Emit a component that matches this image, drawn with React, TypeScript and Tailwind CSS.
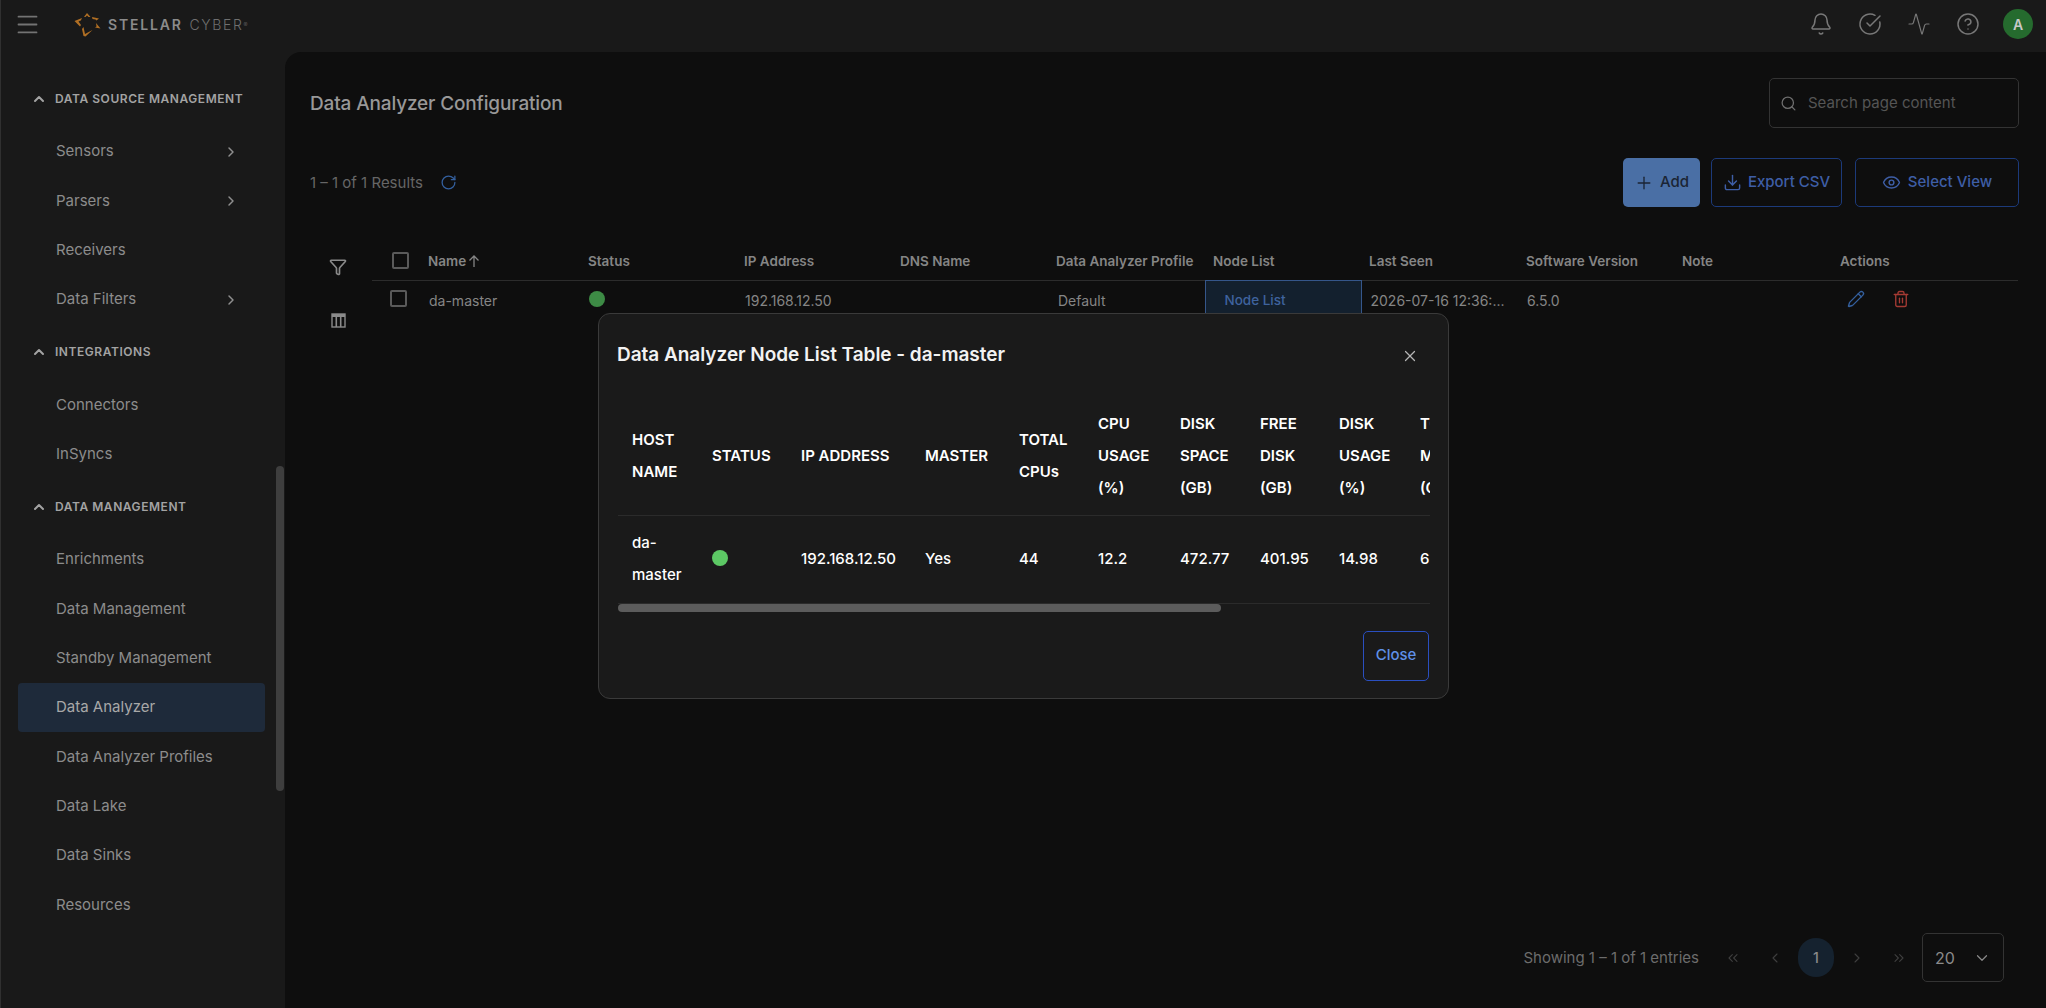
import {
  Activity,
  Bell,
  ChevronDown,
  ChevronLeft,
  ChevronRight,
  ChevronUp,
  ChevronsLeft,
  ChevronsRight,
  CircleCheckBig,
  CircleHelp,
  Download,
  Eye,
  Funnel,
  Menu,
  Pencil,
  Plus,
  RotateCw,
  Search,
  Trash2,
  X,
} from "lucide-react";

const sections = [
  {
    title: "DATA SOURCE MANAGEMENT",
    items: [
      { label: "Sensors", more: true },
      { label: "Parsers", more: true },
      { label: "Receivers" },
      { label: "Data Filters", more: true },
    ],
  },
  {
    title: "INTEGRATIONS",
    items: [{ label: "Connectors" }, { label: "InSyncs" }],
  },
  {
    title: "DATA MANAGEMENT",
    items: [
      { label: "Enrichments" },
      { label: "Data Management" },
      { label: "Standby Management" },
      { label: "Data Analyzer", active: true },
      { label: "Data Analyzer Profiles" },
      { label: "Data Lake" },
      { label: "Data Sinks" },
      { label: "Resources" },
    ],
  },
];

const columns = [
  { label: "Status", width: "w-[156px]" },
  { label: "IP Address", width: "w-[156px]" },
  { label: "DNS Name", width: "w-[156px]" },
  { label: "Data Analyzer Profile", width: "w-[157px]" },
  { label: "Node List", width: "w-[156px]" },
  { label: "Last Seen", width: "w-[157px]" },
  { label: "Software Version", width: "w-[156px]" },
  { label: "Note", width: "w-[158px]" },
  { label: "Actions", width: "w-[186px]" },
];

const nodeColumns = [
  { label: ["HOST", "NAME"], width: "w-[80px]", value: "da-master" },
  { label: ["STATUS"], width: "w-[89px]", value: "" },
  { label: ["IP ADDRESS"], width: "w-[124px]", value: "192.168.12.50" },
  { label: ["MASTER"], width: "w-[94px]", value: "Yes" },
  { label: ["TOTAL", "CPUs"], width: "w-[79px]", value: "44" },
  { label: ["CPU", "USAGE", "(%)"], width: "w-[82px]", value: "12.2" },
  { label: ["DISK", "SPACE", "(GB)"], width: "w-[80px]", value: "472.77" },
  { label: ["FREE", "DISK", "(GB)"], width: "w-[79px]", value: "401.95" },
  { label: ["DISK", "USAGE", "(%)"], width: "w-[81px]", value: "14.98" },
  { label: ["TOTAL", "MEMORY", "(GB)"], width: "w-[90px]", value: "62.50" },
];

function Logo() {
  return (
    <div className="flex items-center gap-[7px]">
      <svg width="27" height="25" viewBox="0 0 27 25" fill="#b06f24">
        <path d="M10 5 L13 1 L16.5 5 L14.5 5 L13 3.4 L11.5 5 Z" />
        <path d="M0.5 9 L8 6 L6.8 8.5 L4.5 9.6 L7 13 L6 14.5 Z" />
        <path d="M18 5 L25 6.5 L22.5 8.6 L21.5 7.5 L18.5 7 Z" />
        <path d="M22 11 L26.5 16.5 L21 15.5 L22.5 14.6 Z" />
        <path d="M9.5 15 L11 22 L17.5 18.5 L18.5 18 L11.5 24.5 L9.5 24 L8 17 Z" />
      </svg>
      <span className="text-[14px] font-semibold tracking-[1.8px] text-[#8b8b8b]">STELLAR</span>
      <span className="text-[14px] font-light tracking-[1.6px] text-[#6f6f6f]">
        CYBER<sup className="text-[6px]">®</sup>
      </span>
    </div>
  );
}

function Sidebar() {
  return (
    <aside className="relative w-[284px] shrink-0 pt-[19px]">
      {sections.map((section) => (
        <div key={section.title}>
          <div className="flex h-[56px] items-center pl-[30px] text-[#a3a3a3]">
            <ChevronUp size={16} strokeWidth={3} />
            <span className="ml-[8px] text-[12px] font-semibold tracking-[0.55px]">{section.title}</span>
          </div>
          {section.items.map((item) => (
            <div
              key={item.label}
              className={`mx-[17px] flex h-[49.33px] w-[247px] items-center justify-between rounded-[4px] pl-[38px] pr-[26px] text-[15px] text-[#8c8c8c] ${
                item.active ? "bg-[#1e2a3a] text-[#a8a8a8]" : ""
              }`}
            >
              {item.label}
              {item.more && <ChevronRight size={16} strokeWidth={2.2} className="text-[#8f8f8f]" />}
            </div>
          ))}
        </div>
      ))}
      <div className="absolute left-[275px] top-[414px] h-[325px] w-[8px] rounded-full bg-[#3e3e3e]" />
    </aside>
  );
}

function ColumnsIcon() {
  return (
    <svg width="15" height="15" viewBox="0 0 15 15" fill="none" stroke="#8a8a8a">
      <rect x="1" y="1" width="13" height="13" strokeWidth="1.4" />
      <path d="M1 2.5 H14" strokeWidth="3" />
      <path d="M5.3 3 V14 M9.7 3 V14" strokeWidth="1.6" />
    </svg>
  );
}

function DataTable() {
  return (
    <div className="mt-[35px] flex items-start">
      <div className="flex w-[62px] shrink-0 flex-col items-center pt-[16px] text-[#8a8a8a]">
        <Funnel size={18} strokeWidth={2.2} className="mr-[6px]" />
        <div className="mr-[6px] mt-[37px]">
          <ColumnsIcon />
        </div>
      </div>
      <table className="w-[1646px] table-fixed border-collapse text-left">
        <thead>
          <tr className="h-[38px] border-b border-[#2c2c2c] text-[13.5px] font-semibold text-[#858585]">
            <th className="w-[48px] pl-[20px] font-semibold">
              <div className="h-[17px] w-[17px] rounded-[2px] border-2 border-[#5a5a5a]" />
            </th>
            <th className="w-[160px] pl-[8px] font-semibold">
              <span className="flex items-center gap-[1px]">
                Name
                <svg width="14" height="14" viewBox="0 0 14 14" fill="none" stroke="#858585" strokeWidth="1.3">
                  <path d="M7 13 V2 M2.5 6.5 L7 2 L11.5 6.5" />
                </svg>
              </span>
            </th>
            {columns.map((column) => (
              <th key={column.label} className={`${column.width} whitespace-nowrap pl-[8px] font-semibold`}>
                {column.label}
              </th>
            ))}
          </tr>
        </thead>
        <tbody>
          <tr className="h-[40px] text-[14px] text-[#858585]">
            <td className="pl-[18px]">
              <div className="mb-[3px] h-[17px] w-[17px] rounded-[2px] border-2 border-[#5a5a5a]" />
            </td>
            <td className="pl-[9px]">da-master</td>
            <td className="pl-[9px]">
              <div className="mb-[3px] h-[16px] w-[16px] rounded-full bg-[#3d8b45]" />
            </td>
            <td className="pl-[9px]">192.168.12.50</td>
            <td />
            <td className="pl-[10px]">Default</td>
            <td className="border border-[#35568a] bg-[#13202e] pl-[19px] text-[13.5px] font-medium text-[#3f639e]">
              Node List
            </td>
            <td className="truncate pl-[9px]">2026-07-16 12:36:...</td>
            <td className="pl-[9px]">6.5.0</td>
            <td />
            <td className="pl-[15px]">
              <div className="mb-[3px] flex items-center gap-[27px]">
                <Pencil size={18} strokeWidth={1.8} className="text-[#34609f]" />
                <Trash2 size={18} strokeWidth={1.8} className="text-[#a43a33]" />
              </div>
            </td>
          </tr>
        </tbody>
      </table>
    </div>
  );
}

function NodeListDialog() {
  return (
    <div className="absolute left-[313px] top-[261px] h-[386px] w-[851px] rounded-[12px] border border-[#3a3a3a] bg-[#1a1a1a] px-[19px]">
      <div className="flex h-[83px] items-center justify-between">
        <h2 className="ml-[-1px] text-[19px] font-semibold tracking-[-0.03px] text-[#f2f2f2]">
          Data Analyzer Node List Table - da-master
        </h2>
        <X size={18} strokeWidth={1.6} className="mr-[10px] text-[#b5b5b5]" />
      </div>
      <div className="w-[812px] overflow-hidden">
        <table className="w-[1094px] table-fixed border-collapse text-left text-[15px] leading-[32px] text-white">
          <thead>
            <tr className="h-[118px] border-b border-[#2b2b2b]">
              {nodeColumns.map((column) => (
                <th key={column.label[0] + column.width} className={`${column.width} pl-[14px] font-semibold`}>
                  {column.label.map((line) => (
                    <div key={line} className="whitespace-nowrap">
                      {line}
                    </div>
                  ))}
                </th>
              ))}
              <th />
            </tr>
          </thead>
          <tbody>
            <tr className="h-[88px] border-b border-[#2b2b2b] font-medium">
              {nodeColumns.map((column) => (
                <td key={column.label[0] + column.width} className="pl-[14px]">
                  {column.value === "" ? (
                    <div className="mb-[3px] h-[16px] w-[16px] rounded-full bg-[#5cc864]" />
                  ) : column.value === "da-master" ? (
                    <>
                      da-
                      <br />
                      master
                    </>
                  ) : (
                    column.value
                  )}
                </td>
              ))}
              <td />
            </tr>
          </tbody>
        </table>
        <div className="h-[8px] w-[603px] rounded-full bg-[#5c5c5c]" />
      </div>
      <div className="mt-[19px] flex justify-end">
        <button className="h-[50px] w-[66px] rounded-[5px] border border-[#2a4fc0] text-[15px] font-medium text-[#5f90e8]">
          Close
        </button>
      </div>
    </div>
  );
}

export default function App() {
  return (
    <div className="flex h-screen w-full flex-col overflow-hidden border-l border-[#303030] bg-[#191919] font-[Inter,sans-serif]">
      <header className="flex h-[52px] shrink-0 items-center pb-[4px] pl-[13px] pr-[13px]">
        <Menu size={27} strokeWidth={1.6} className="text-[#737373]" />
        <div className="ml-[33px]">
          <Logo />
        </div>
        <div className="ml-auto flex items-center gap-[25px] text-[#787878]">
          <Bell size={24} strokeWidth={1.5} />
          <CircleCheckBig size={24} strokeWidth={1.5} />
          <Activity size={24} strokeWidth={1.2} />
          <CircleHelp size={24} strokeWidth={1.5} />
          <div className="ml-[-2px] flex h-[30px] w-[30px] items-center justify-center rounded-full bg-[#256b2e] text-[14px] font-semibold text-[#c9c9c9]">
            A
          </div>
        </div>
      </header>
      <div className="flex min-h-0 flex-1">
        <Sidebar />
        <main className="relative flex min-w-0 flex-1 flex-col rounded-tl-[16px] bg-[#0e0e0e] pl-[25px] pr-[27px]">
          <div className="mt-[26px] flex h-[50px] items-center justify-between">
            <h1 className="pt-[2px] text-[19px] font-medium tracking-[-0.15px] text-[#989898]">
              Data Analyzer Configuration
            </h1>
            <div className="flex h-[50px] w-[250px] items-center rounded-[5px] border border-[#333333] pl-[10px] text-[#6f6f6f]">
              <Search size={17} strokeWidth={1.8} />
              <span className="ml-[11px] text-[15px] text-[#555555]">Search page content</span>
            </div>
          </div>
          <div className="mt-[30px] flex h-[49px] items-center">
            <span className="pt-[1px] text-[15px] text-[#666666]">1 – 1 of 1 Results</span>
            <RotateCw size={17} strokeWidth={1.8} className="ml-[17px] text-[#34609f]" />
            <div className="ml-auto flex h-full items-stretch">
              <button className="flex w-[77px] items-center justify-center gap-[6px] rounded-[5px] bg-[#4a6fa5] text-[15px] font-medium text-[#1b2534]">
                <Plus size={20} strokeWidth={1.6} />
                Add
              </button>
              <button className="ml-[11px] flex w-[131px] items-center justify-center gap-[6px] rounded-[5px] border border-[#1c3a7a] text-[15px] font-medium text-[#3e5ea6]">
                <Download size={19} strokeWidth={1.8} />
                Export CSV
              </button>
              <button className="ml-[13px] flex w-[164px] items-center justify-center gap-[7px] rounded-[5px] border border-[#1c3a7a] text-[15px] font-medium text-[#3e5ea6]">
                <Eye size={19} strokeWidth={1.8} />
                Select View
              </button>
            </div>
          </div>
          <DataTable />
          <div className="mt-auto mb-[26px] flex h-[49px] items-center justify-end pr-[15px] text-[#6c6c6c]">
            <span className="mr-[26px] pt-[1px] text-[15px]">Showing 1 – 1 of 1 entries</span>
            <ChevronsLeft size={16} strokeWidth={1.6} className="text-[#3f3f3f]" />
            <ChevronLeft size={16} strokeWidth={1.6} className="ml-[26px] text-[#3f3f3f]" />
            <div className="ml-[15px] flex h-[39px] w-[36px] items-center justify-center rounded-full bg-[#15222f] text-[14px] font-medium text-[#8a8a8a]">
              1
            </div>
            <ChevronRight size={16} strokeWidth={1.6} className="ml-[15px] text-[#3f3f3f]" />
            <ChevronsRight size={16} strokeWidth={1.6} className="ml-[26px] text-[#3f3f3f]" />
            <div className="ml-[15px] flex h-[49px] w-[82px] items-center justify-between rounded-[5px] border border-[#333333] pl-[12px] pr-[12px] text-[16px] text-[#8a8a8a]">
              20
              <ChevronDown size={18} strokeWidth={1.6} />
            </div>
          </div>
          <NodeListDialog />
        </main>
      </div>
    </div>
  );
}
